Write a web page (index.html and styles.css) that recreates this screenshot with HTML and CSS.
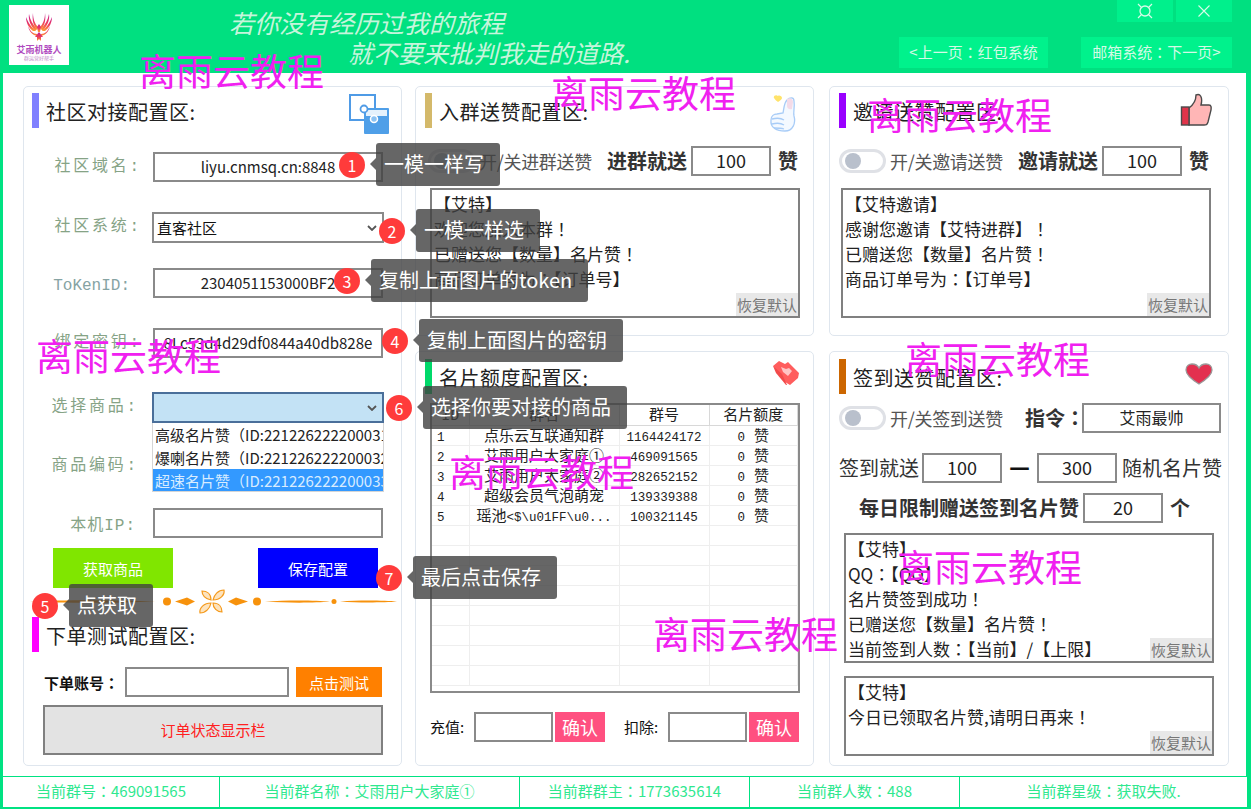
FILE: index.html
```html
<!DOCTYPE html>
<html>
<head>
<meta charset="utf-8">
<title>艾雨机器人</title>
<link rel="stylesheet" href="styles.css">
</head>
<body>
<div class="window">
  <header class="topbar">
    <div class="logo">
      <svg class="logo-bird" viewBox="0 0 36 32" width="36" height="32">
        <defs><linearGradient id="fire" x1="0" y1="0" x2="0" y2="1"><stop offset="0" stop-color="#c2188f"/><stop offset=".55" stop-color="#ee3b5e"/><stop offset="1" stop-color="#ffa030"/></linearGradient></defs>
        <g fill="url(#fire)">
          <path d="M5 5C7 10 9 14 15 19L12 19C8 16 5 11 5 5Z"/>
          <path d="M8 2C9 8 12 13 16 17L14 19C10 14 7 8 8 2Z"/>
          <path d="M12 1C12 7 14 12 17 15L16 18C12 13 11 7 12 1Z"/>
          <path d="M31 5C29 10 27 14 21 19L24 19C28 16 31 11 31 5Z"/>
          <path d="M28 2C27 8 24 13 20 17L22 19C26 14 29 8 28 2Z"/>
          <path d="M24 1C24 7 22 12 19 15L20 18C24 13 25 7 24 1Z"/>
          <path d="M7 14C9 19 12 22 16 22L16 24C11 23 8 19 7 14Z"/>
          <path d="M29 14C27 19 24 22 20 22L20 24C25 23 28 19 29 14Z"/>
          <path d="M18 12l2 3-1 5h-2l-1-5z"/>
          <path d="M18 20l4 5-2 0 0 4-2-2-2 2 0-4-2 0z"/>
        </g>
      </svg>
      <div class="logo-name">艾雨机器人</div>
      <div class="logo-sub">群运营好帮手</div>
    </div>
    <div class="motto">
      <p class="motto-a">若你没有经历过我的旅程</p>
      <p class="motto-b">就不要来批判我走的道路.</p>
    </div>
    <div class="top-right">
      <div class="win-btns">
        <button class="win-btn" type="button"><svg viewBox="0 0 16 16" width="16" height="16"><circle cx="8" cy="8" r="5" fill="none" stroke="#d8fbe9" stroke-width="1.3"/><path d="M1 1l3.5 3.5M15 1l-3.500 3.500M1 15l3.500-3.500M15 15l-3.500-3.500" stroke="#d8fbe9" stroke-width="1.2"/></svg></button>
        <button class="win-btn" type="button"><svg viewBox="0 0 14 14" width="14" height="14"><path d="M1.500 1.500l11 11M12.500 1.500l-11 11" stroke="#d8fbe9" stroke-width="1.100"/></svg></button>
      </div>
      <div class="nav-btns">
        <button class="nav-btn nav-prev" type="button">&lt;上一页<b class="pu">：</b>红包系统</button>
        <button class="nav-btn nav-next" type="button">邮箱系统<b class="pu">：</b>下一页&gt;</button>
      </div>
    </div>
  </header>

  <main class="content">
    <section class="panel panel-left">
      <div class="head">
        <i class="accent accent-blue"></i><h2 class="title">社区对接配置区:</h2>
        <svg class="icon icon-link" viewBox="0 0 40 40" width="40" height="40">
          <rect x="1" y="1" width="25" height="25" fill="none" stroke="#4f9be6" stroke-width="2"/>
          <rect x="15" y="14" width="25" height="26" rx="1" fill="#4f9fe8"/>
          <rect x="17" y="16" width="21" height="6" fill="#e4f1fc"/>
          <circle cx="15" cy="15" r="3.500" fill="#fff" stroke="#4f9be6" stroke-width="1.800"/>
          <circle cx="25" cy="25" r="3.500" fill="#8cc2f2" stroke="#fff" stroke-width="1.500"/>
        </svg>
      </div>
      <div class="form">
        <div class="form-row"><label class="label">社区域名:</label><input class="input wide" value="liyu.cnmsq.cn:8848"></div>
        <div class="form-row"><label class="label">社区系统:</label>
          <div class="select">直客社区<svg class="chevron" viewBox="0 0 10 6" width="10" height="6"><path d="M1 1l4 4 4-4" fill="none" stroke="#555" stroke-width="1.800"/></svg></div>
        </div>
        <div class="form-row"><label class="label label-token label-low">ToKenID:</label><input class="input wide" value="2304051153000BF2"></div>
        <div class="form-row"><label class="label">绑定密钥:</label><input class="input wide" value="8Lc53d4d29df0844a40db828e"></div>
        <div class="form-row"><label class="label label-tight">选择商品:</label>
          <div class="select select-open"><svg class="chevron" viewBox="0 0 10 6" width="10" height="6"><path d="M1 1l4 4 4-4" fill="none" stroke="#555" stroke-width="1.800"/></svg>
            <ul class="dropdown">
              <li class="option">高级名片赞<b class="pu">（</b>ID:221226222200031<b class="pu">）</b></li>
              <li class="option">爆喇名片赞<b class="pu">（</b>ID:221226222200032<b class="pu">）</b></li>
              <li class="option option-on">超速名片赞<b class="pu">（</b>ID:221226222200033<b class="pu">）</b></li>
            </ul>
          </div>
        </div>
        <div class="form-row"><label class="label label-tight label-low">商品编码:</label><input class="input wide"></div>
        <div class="form-row"><label class="label label-ip label-low">本机IP:</label><input class="input wide"></div>
      </div>
      <div class="actions">
        <button class="btn btn-green" type="button">获取商品</button>
        <button class="btn btn-blue" type="button">保存配置</button>
      </div>
      <svg class="ornament" viewBox="0 0 367 26" width="367" height="26">
        <g fill="#f7920c">
          <path d="M0 12.500C25 11 85 10.500 125 12.500C85 14.500 25 14 0 12.500Z"/>
          <circle cx="137" cy="12.500" r="4"/>
          <path d="M145 12.500l12-4 8 4-8 4z"/>
          <circle cx="227" cy="12.500" r="4"/>
          <path d="M218 12.500l-12-4-8 4 8 4z"/>
          <path d="M235 12.500C255 11 285 11 300 12.500C285 14 255 14 235 12.500Z"/>
          <circle cx="304" cy="12.500" r="2.500"/>
          <path d="M310 12.500C330 11 355 11.500 367 12.500C355 13.500 330 14 310 12.500Z"/>
        </g>
        <g fill="#fde3bd" stroke="#f59a1c" stroke-width="1.200">
          <path d="M181 11C175 10 172 6 172 2C177 2 181 5 181 11Z"/>
          <path d="M183 11C184 6 188 1 194 1C195 6 190 11 183 11Z"/>
          <path d="M183 14C189 14 192 18 192 23C187 23 183 19 183 14Z"/>
          <path d="M181 14C180 19 176 24 170 24C169 19 174 14 181 14Z"/>
        </g>
      </svg>
      <div class="head head-sub">
        <i class="accent accent-pink"></i><h2 class="title">下单测试配置区:</h2>
      </div>
      <div class="order-row">
        <span class="order-label">下单账号<b class="pu">：</b></span>
        <input class="input order-input">
        <button class="btn btn-orange" type="button">点击测试</button>
      </div>
      <div class="order-status">订单状态显示栏</div>
    </section>

    <div class="col">
      <section class="panel panel-upper">
        <div class="head">
          <i class="accent accent-gold"></i><h2 class="title">入群送赞配置区:</h2>
          <svg class="icon icon-thumb" viewBox="0 0 28 38" width="28" height="38">
            <path d="M14 18c1-5 1-10 4-13 3-3 7-3 7 1 1 6-1 11 0 15 2 7-1 15-9 15C8 36 1 33 2 25c0-4 3-6 6-6z" fill="#f4f9ff" stroke="#a8ccf7" stroke-width="1.300"/>
            <path d="M18 4c3-2 6 0 6 3l-1 7c-3 1-5-1-5-3z" fill="#f4dbe8"/>
            <path d="M9 1c-2-2-5 0-4 2 1 2 3 3 4 4 2-1 4-3 4-4 0-2-3-3-4-2z" fill="#ffe36a"/>
            <path d="M3 24c4-1 9-1 12 1M3 29c4-1 9-1 12 1M5 33c3 0 7 0 10 1" fill="none" stroke="#a8ccf7" stroke-width="1.300"/>
          </svg>
        </div>
        <div class="switch-row switch-row-gold">
          <span class="toggle"><i class="knob"></i></span>
          <span class="switch-text">开/关进群送赞</span>
          <span class="strong strong-gap">进群就送</span>
          <input class="input small input-gap" value="100">
          <span class="strong unit">赞</span>
        </div>
        <div class="msg msg-upper msg-a">
          <p>【艾特】</p><p>欢迎您加入本群<b class="pu">！</b></p><p>已赠送您【数量】名片赞<b class="pu">！</b></p><p>商品订单号为<b class="pu">：</b>【订单号】</p>
          <button class="reset" type="button">恢复默认</button>
        </div>
      </section>
      <section class="panel panel-lower">
        <div class="head">
          <i class="accent accent-green"></i><h2 class="title">名片额度配置区:</h2>
          <svg class="icon icon-tag" viewBox="0 0 28 26" width="28" height="26">
            <path d="M1 6l6-5 6 3 3-2 11 11-1 5-8 7-5-3z" fill="#ff5d5d"/>
            <path d="M1 6l3 7 10 12 1 0-5-11z" fill="#f24a4a"/>
            <path d="M9 7l5 2 3-1 3 3-4 5-5-4z" fill="#ffc4c4"/>
          </svg>
        </div>
        <div class="table-wrap">
          <table class="grid-table">
            <colgroup><col class="c1"><col class="c2"><col class="c3"><col class="c4"></colgroup>
            <thead><tr><th>ID</th><th>群名</th><th>群号</th><th>名片额度</th></tr></thead>
            <tbody>
              <tr><td class="left"><span class="num">1</span></td><td>点乐云互联通知群</td><td><span class="num">1164424172</span></td><td><span class="num">0</span> 赞</td></tr>
              <tr><td class="left"><span class="num">2</span></td><td>艾雨用户大家庭①</td><td><span class="num">469091565</span></td><td><span class="num">0</span> 赞</td></tr>
              <tr><td class="left"><span class="num">3</span></td><td>艾雨用户大家庭②</td><td><span class="num">282652152</span></td><td><span class="num">0</span> 赞</td></tr>
              <tr><td class="left"><span class="num">4</span></td><td>超级会员气泡萌宠</td><td><span class="num">139339388</span></td><td><span class="num">0</span> 赞</td></tr>
              <tr><td class="left"><span class="num">5</span></td><td>瑶池<span class="num">&lt;$\u01FF\u0...</span></td><td><span class="num">100321145</span></td><td><span class="num">0</span> 赞</td></tr>
              <tr><td></td><td></td><td></td><td></td></tr>
              <tr><td></td><td></td><td></td><td></td></tr>
              <tr><td></td><td></td><td></td><td></td></tr>
              <tr><td></td><td></td><td></td><td></td></tr>
              <tr><td></td><td></td><td></td><td></td></tr>
              <tr><td></td><td></td><td></td><td></td></tr>
              <tr><td></td><td></td><td></td><td></td></tr>
              <tr><td></td><td></td><td></td><td></td></tr>
            </tbody>
          </table>
        </div>
        <div class="recharge">
          <span class="re-label">充值:</span><input class="input re-input"><button class="btn btn-rose" type="button">确认</button>
          <span class="re-label re-gap">扣除:</span><input class="input re-input"><button class="btn btn-rose" type="button">确认</button>
        </div>
      </section>
    </div>

    <div class="col col-right">
      <section class="panel panel-upper">
        <div class="head">
          <i class="accent accent-purple"></i><h2 class="title">邀请送赞配置区:</h2>
          <svg class="icon icon-like" viewBox="0 0 32 34" width="32" height="34">
            <path d="M9 15C13 12 16 8 16 2C20 0 23 4 21 12H29C32 12 31 16 31 17L28 29C27 32 26 32 24 32H9Z" fill="#ffb6b6" stroke="#4a4a4a" stroke-width="1.400"/>
            <rect x="1.500" y="14" width="7.500" height="18" fill="#e0344a" stroke="#4a4a4a" stroke-width="1.400"/>
          </svg>
        </div>
        <div class="switch-row">
          <span class="toggle"><i class="knob"></i></span>
          <span class="switch-text">开/关邀请送赞</span>
          <span class="strong strong-gap">邀请就送</span>
          <input class="input small input-gap" value="100">
          <span class="strong unit">赞</span>
        </div>
        <div class="msg msg-upper msg-b">
          <p>【艾特邀请】</p><p>感谢您邀请【艾特进群】<b class="pu">！</b></p><p>已赠送您【数量】名片赞<b class="pu">！</b></p><p>商品订单号为<b class="pu">：</b>【订单号】</p>
          <button class="reset" type="button">恢复默认</button>
        </div>
      </section>
      <section class="panel panel-lower">
        <div class="head">
          <i class="accent accent-brown"></i><h2 class="title">签到送赞配置区:</h2>
          <svg class="icon icon-heart" viewBox="0 0 28 22" width="28" height="22">
            <path d="M14 21C6 16 1 12 1 7C1 3 4 1 7 1C10 1 13 3 14 5C15 3 18 1 21 1C24 1 27 3 27 7C27 12 22 16 14 21Z" fill="#e3304f" stroke="#9a9a9a" stroke-width="1.300"/>
          </svg>
        </div>
        <div class="switch-row switch-row-sign">
          <span class="toggle"><i class="knob"></i></span>
          <span class="switch-text">开/关签到送赞</span>
          <span class="strong cmd-label">指令<b class="pu">：</b></span>
          <input class="input cmd-input" value="艾雨最帅">
        </div>
        <div class="range-row">
          <span class="plain">签到就送</span><input class="input small range-a" value="100"><span class="dash">一</span><input class="input small" value="300"><span class="plain range-tail">随机名片赞</span>
        </div>
        <div class="limit-row">
          <span class="strong">每日限制赠送签到名片赞</span><input class="input small input-gap" value="20"><span class="strong unit">个</span>
        </div>
        <div class="msg msg-sign">
          <p>【艾特】</p><p>QQ<b class="pu">：</b>【QQ】</p><p>名片赞签到成功<b class="pu">！</b></p><p>已赠送您【数量】名片赞<b class="pu">！</b></p><p>当前签到人数<b class="pu">：</b>【当前】/【上限】</p>
          <button class="reset" type="button">恢复默认</button>
        </div>
        <div class="msg msg-limit">
          <p>【艾特】</p><p>今日已领取名片赞,请明日再来<b class="pu">！</b></p>
          <button class="reset" type="button">恢复默认</button>
        </div>
      </section>
    </div>
  </main>

  <footer class="statusbar">
    <div class="cell">当前群号<b class="pu">：</b>469091565</div>
    <div class="cell">当前群名称<b class="pu">：</b>艾雨用户大家庭①</div>
    <div class="cell">当前群群主<b class="pu">：</b>1773635614</div>
    <div class="cell">当前群人数<b class="pu">：</b>488</div>
    <div class="cell">当前群星级<b class="pu">：</b>获取失败.</div>
  </footer>

  <div class="wm wm-1">离雨云教程</div>
  <div class="wm wm-2">离雨云教程</div>
  <div class="wm wm-3">离雨云教程</div>
  <div class="wm wm-4">离雨云教程</div>
  <div class="wm wm-5">离雨云教程</div>
  <div class="wm wm-6">离雨云教程</div>
  <div class="wm wm-7">离雨云教程</div>
  <div class="wm wm-8">离雨云教程</div>

  <div class="tip tip-1"><span class="badge">1</span><span class="bubble">一模一样写</span></div>
  <div class="tip tip-2"><span class="badge">2</span><span class="bubble">一模一样选</span></div>
  <div class="tip tip-3"><span class="badge">3</span><span class="bubble">复制上面图片的token</span></div>
  <div class="tip tip-4"><span class="badge">4</span><span class="bubble">复制上面图片的密钥</span></div>
  <div class="tip tip-5"><span class="badge">5</span><span class="bubble">点获取</span></div>
  <div class="tip tip-6"><span class="badge">6</span><span class="bubble">选择你要对接的商品</span></div>
  <div class="tip tip-7"><span class="badge">7</span><span class="bubble">最后点击保存</span></div>
</div>
</body>
</html>
```

FILE: styles.css
```css
* { box-sizing: border-box; }
html, body { margin: 0; padding: 0; overflow: hidden; }
body { font-family: "Noto Sans CJK SC", "Noto Sans", sans-serif; color: #111; }
p, h2, ul { margin: 0; padding: 0; }
button { font-family: inherit; border: 0; padding: 0; cursor: pointer; }
input { font-family: inherit; }
.pu { font-family: "Noto Sans CJK TC", "Noto Sans CJK SC", sans-serif; font-weight: inherit; }

.window {
  position: relative;
  width: 1251px;
  height: 809px;
  overflow: hidden;
  display: flex;
  flex-direction: column;
  background: #00e282;
}

/* top bar */
.topbar { height: 73px; flex: none; display: flex; background: #00e080; }
.logo {
  width: 60px; height: 60px; margin: 5px 0 0 9px; flex: none;
  background: #fff; text-align: center; line-height: 1;
}
.logo-bird { display: block; margin: 7px auto 0; }
.logo-name { font-size: 9px; font-weight: 700; color: #b04cc0; margin-top: 1px; white-space: nowrap; }
.logo-sub { font-size: 5px; color: #c08ac8; margin-top: 1px; white-space: nowrap; }
.motto { margin-left: 160px; font-size: 25px; font-style: italic; color: #c6f5dc; line-height: 30px; white-space: nowrap; }
.motto-a { margin-top: 7px; }
.motto-b { margin-left: 119px; }
.top-right { margin-left: auto; width: 352px; padding-right: 19px; flex: none; }
.win-btns { display: flex; justify-content: flex-end; gap: 3px; }
.win-btn { width: 56px; height: 22px; background: #00f08c; display: flex; align-items: center; justify-content: center; }
.nav-btns { display: flex; justify-content: flex-end; gap: 33px; margin-top: 15px; }
.nav-btn { height: 31px; background: #00f28c; color: #d4fae6; font-size: 15px; white-space: nowrap; padding-bottom: 2px; }
.nav-prev { width: 149px; }
.nav-next { width: 151px; }

/* content */
.content {
  flex: 1;
  margin: 0 5px 0 3px;
  padding: 13px 17px 10px 20px;
  background: #fff;
  display: grid;
  grid-template-columns: 379px 399px 402px;
  column-gap: 13px;
  min-height: 0;
}
.col { display: flex; flex-direction: column; gap: 15px; min-height: 0; }
.col-right { margin-left: 2px; }
.panel {
  border: 1px solid #dfe6ee;
  border-radius: 5px;
  padding: 6px 9px 0;
  background: #fff;
}
.panel-left { padding-left: 8px; padding-right: 8px; }
.panel-upper { height: 250px; flex: none; }
.panel-lower { flex: 1; padding-top: 7px; }
.head { display: flex; height: 35px; }
.accent { width: 7px; height: 35px; flex: none; display: block; }
.accent-blue { background: #8080ff; }
.accent-pink { background: #ff00ff; }
.accent-gold { background: #d4b96a; }
.accent-green { background: #00d96a; }
.accent-purple { background: #9900ff; }
.accent-brown { background: #cc6600; }
.title { font-size: 20px; font-weight: 400; line-height: 28px; letter-spacing: .5px; margin: 5px 0 0 7px; color: #222; white-space: nowrap; }
.icon { margin-left: auto; flex: none; margin-top: 1px; margin-right: 3px; }
.icon-link { margin-right: 4px; }
.icon-thumb { margin-right: 7px; margin-top: 2px; }
.icon-like { margin-right: 7px; margin-top: 0; }
.icon-tag { margin-right: 4px; margin-top: 1px; }
.icon-heart { margin-right: 6px; margin-top: 4px; }

/* inputs */
.input {
  height: 30px;
  border: 2px solid #8a8a8a;
  background: #fff;
  padding: 0 0 2px;
  text-align: center;
  font-size: 15px;
  color: #222;
  outline: none;
  flex: none;
}
.wide { width: 230px; margin-left: 1px; }
.small { width: 80px; font-size: 18px; }

/* left panel form */
.form {
  margin-top: 24px;
  display: grid;
  grid-template-rows: 60px 56px 60px 64px 56px 60px 30px;
}
.form-row { display: flex; align-items: flex-start; }
.label {
  width: 120px; height: 30px; line-height: 30px; padding-right: 10px;
  text-align: right; flex: none; white-space: nowrap;
  font-family: "Liberation Mono", "Noto Sans CJK SC", monospace;
  font-size: 16px; letter-spacing: 2.800px; color: #86a386;
}
.label-token { letter-spacing: 0; padding-right: 22px; color: #86a3a3; }
.label-tight { padding-right: 13px; }
.label-ip { letter-spacing: 1px; padding-right: 16px; }
.label-low { margin-top: 3px; }
.select {
  position: relative; width: 232px; height: 31px;
  border: 2px solid #8a8a8a; background: #fff;
  font-size: 15px; line-height: 27px; padding-left: 3px; flex: none;
}
.select-open { background: #c3e2f5; border-color: #4a6f9a; }
.chevron { position: absolute; right: 5px; top: 11px; }
.dropdown {
  position: absolute; left: -2px; top: 29px; width: 232px; height: 69px;
  list-style: none; background: #fff; border: 1px solid #d5d5d5; border-top: 0;
  overflow: hidden; z-index: 2;
}
.option { height: 23px; line-height: 23px; padding-left: 2px; white-space: nowrap; overflow: hidden; font-size: 15px; color: #222; }
.option-on { background: #3399ff; color: #d8ecff; }
.actions { display: flex; justify-content: space-between; padding: 0 15px 0 21px; margin-top: 10px; }
.btn { color: #fff; font-size: 15px; flex: none; }
.actions .btn { width: 120px; height: 40px; }
.btn-green { background: #80e600; }
.btn-blue { background: #0000ff; }
.btn-orange { background: #ff8000; width: 86px; height: 30px; }
.btn-rose { background: #ff5080; width: 50px; height: 30px; font-size: 18px; margin-left: 2px; }
.ornament { display: block; margin: 1px 0 2px -2px; }
.head-sub { margin-top: 1px; }
.order-row { display: flex; align-items: center; margin: 15px 0 0 12px; }
.order-label { font-size: 15px; font-weight: 700; width: 81px; white-space: nowrap; }
.order-input { width: 164px; }
.order-row .btn { margin-left: 7px; }
.order-status {
  margin: 8px 0 0 11px; width: 340px; height: 50px;
  background: #e3e3e3; border: 2px solid #808080;
  color: #ff2020; font-size: 15px; text-align: center; line-height: 46px;
}

/* switch rows */
.switch-row { display: flex; align-items: center; height: 30px; margin-top: 18px; }
.switch-row-gold { padding-left: 3px; }
.toggle { width: 47px; height: 24px; border: 3px solid #dfe1e6; border-radius: 12px; flex: none; padding: 1px 0 0 3px; background: #fff; }
.knob { display: block; width: 16px; height: 16px; border-radius: 50%; background: #b9c0cc; }
.switch-text { font-size: 18px; letter-spacing: -.3px; color: #555; margin-left: 4px; width: 113px; flex: none; white-space: nowrap; }
.strong { font-size: 20px; font-weight: 700; color: #333; white-space: nowrap; flex: none; line-height: 30px; }
.strong-gap { margin-left: 15px; }
.input-gap { margin-left: 4px; }
.unit { margin-left: 7px; }
.cmd-label { margin-left: 22px; width: 57px; }
.cmd-input { width: 139px; font-size: 16px; }
.switch-row-sign { margin-top: 9px; }
.range-row { display: flex; align-items: center; margin-top: 20px; }
.plain { font-size: 20px; color: #333; white-space: nowrap; flex: none; line-height: 30px; }
.range-a { margin-left: 3px; }
.dash { font-size: 20px; font-weight: 700; width: 35px; flex: none; text-align: center; }
.range-tail { margin-left: 5px; }
.limit-row { display: flex; align-items: center; margin: 10px 0 0 20px; }

/* message boxes */
.msg {
  position: relative; width: 370px; border: 2px solid #808080; background: #fff;
  font-size: 17px; line-height: 25px; padding: 1px 0 0 2px; color: #222; white-space: nowrap;
}
.msg-upper { height: 130px; margin-top: 12px; }
.msg-a { margin-left: 5px; }
.msg-b { margin-left: 2px; }
.msg-sign { height: 130px; margin: 10px 0 0 5px; }
.msg-limit { height: 80px; margin: 13px 0 0 5px; }
.reset {
  position: absolute; right: 0; bottom: 0; width: 62px; height: 23px;
  background: #e8e8e8; color: #777; font-size: 15px; line-height: 23px; white-space: nowrap;
}

/* table */
.table-wrap {
  margin: 9px 0 0 5px; width: 370px; height: 290px; border: 2px solid #8a8a8a;
  background: #fff; overflow: hidden;
}
.grid-table {
  width: 366px; table-layout: fixed; border-collapse: collapse;
  font-family: "Liberation Mono", "Noto Sans CJK SC", monospace; font-size: 15px; color: #222;
}
.c1 { width: 37px; }
.c2 { width: 150px; }
.c3 { width: 90px; }
.grid-table th, .grid-table td {
  height: 20px; padding: 4px 0 0; text-align: center; font-weight: 400; line-height: 15px;
  border-right: 1px solid #eeeeee; border-bottom: 1px solid #eeeeee; white-space: nowrap; overflow: hidden;
}
.grid-table th { border-right-color: #d8d8d8; border-bottom-color: #d8d8d8; padding-top: 3px; }
.grid-table td.left { text-align: left; padding-left: 5px; }
.num { font-size: 12.500px; line-height: 1; }
.recharge { display: flex; align-items: center; margin: 19px 0 0 5px; }
.re-label { font-size: 15px; width: 44px; white-space: nowrap; padding-bottom: 2px; }
.re-gap { margin-left: 19px; }
.re-input { width: 79px; }

/* status bar */
.statusbar {
  flex: none; height: 33px; margin: 0; background: #fff;
  border: solid #00e282; border-width: 1px 4px 2px 3px;
  display: grid; grid-template-columns: 217px 300px 230px 210px 1fr;
}
.cell {
  border-right: 1px solid #00e282; text-align: center; font-size: 15px; line-height: 28px;
  color: #2fe88f; white-space: nowrap;
}
.cell:last-child { border-right: 0; }

/* watermarks */
.wm {
  position: absolute; font-size: 37px; line-height: 40px; color: #f020f0;
  white-space: nowrap; font-weight: 400; z-index: 3;
}
.wm-1 { left: 139px; top: 50px; }
.wm-2 { left: 551px; top: 72px; }
.wm-3 { left: 867px; top: 94px; }
.wm-4 { left: 36px; top: 335px; }
.wm-5 { left: 905px; top: 338px; }
.wm-6 { left: 449px; top: 451px; }
.wm-7 { left: 897px; top: 546px; }
.wm-8 { left: 653px; top: 613px; }

/* guide tips */
.tip { position: absolute; display: flex; align-items: center; gap: 11px; z-index: 4; }
.tip-1 { left: 339px; top: 143px; }
.tip-2 { left: 379px; top: 209px; }
.tip-3 { left: 334px; top: 259px; }
.tip-4 { left: 382px; top: 319px; }
.tip-5 { left: 32px; top: 584px; }
.tip-6 { left: 386px; top: 386px; }
.tip-7 { left: 376px; top: 556px; }
.badge {
  width: 26px; height: 26px; border-radius: 50%; background: #ff3b3b; color: #fff;
  font-size: 16px; line-height: 26px; text-align: center; flex: none;
}
.bubble {
  position: relative; height: 43px; line-height: 42px; padding: 0 16px 0 8px;
  background: rgba(64, 64, 64, .8); color: #fff; font-size: 20px; border-radius: 3px; white-space: nowrap;
}
.bubble::before {
  content: ""; position: absolute; left: -6px; top: 15px;
  border-style: solid; border-width: 6px 6px 6px 0;
  border-color: transparent rgba(64, 64, 64, .8) transparent transparent;
}
```
